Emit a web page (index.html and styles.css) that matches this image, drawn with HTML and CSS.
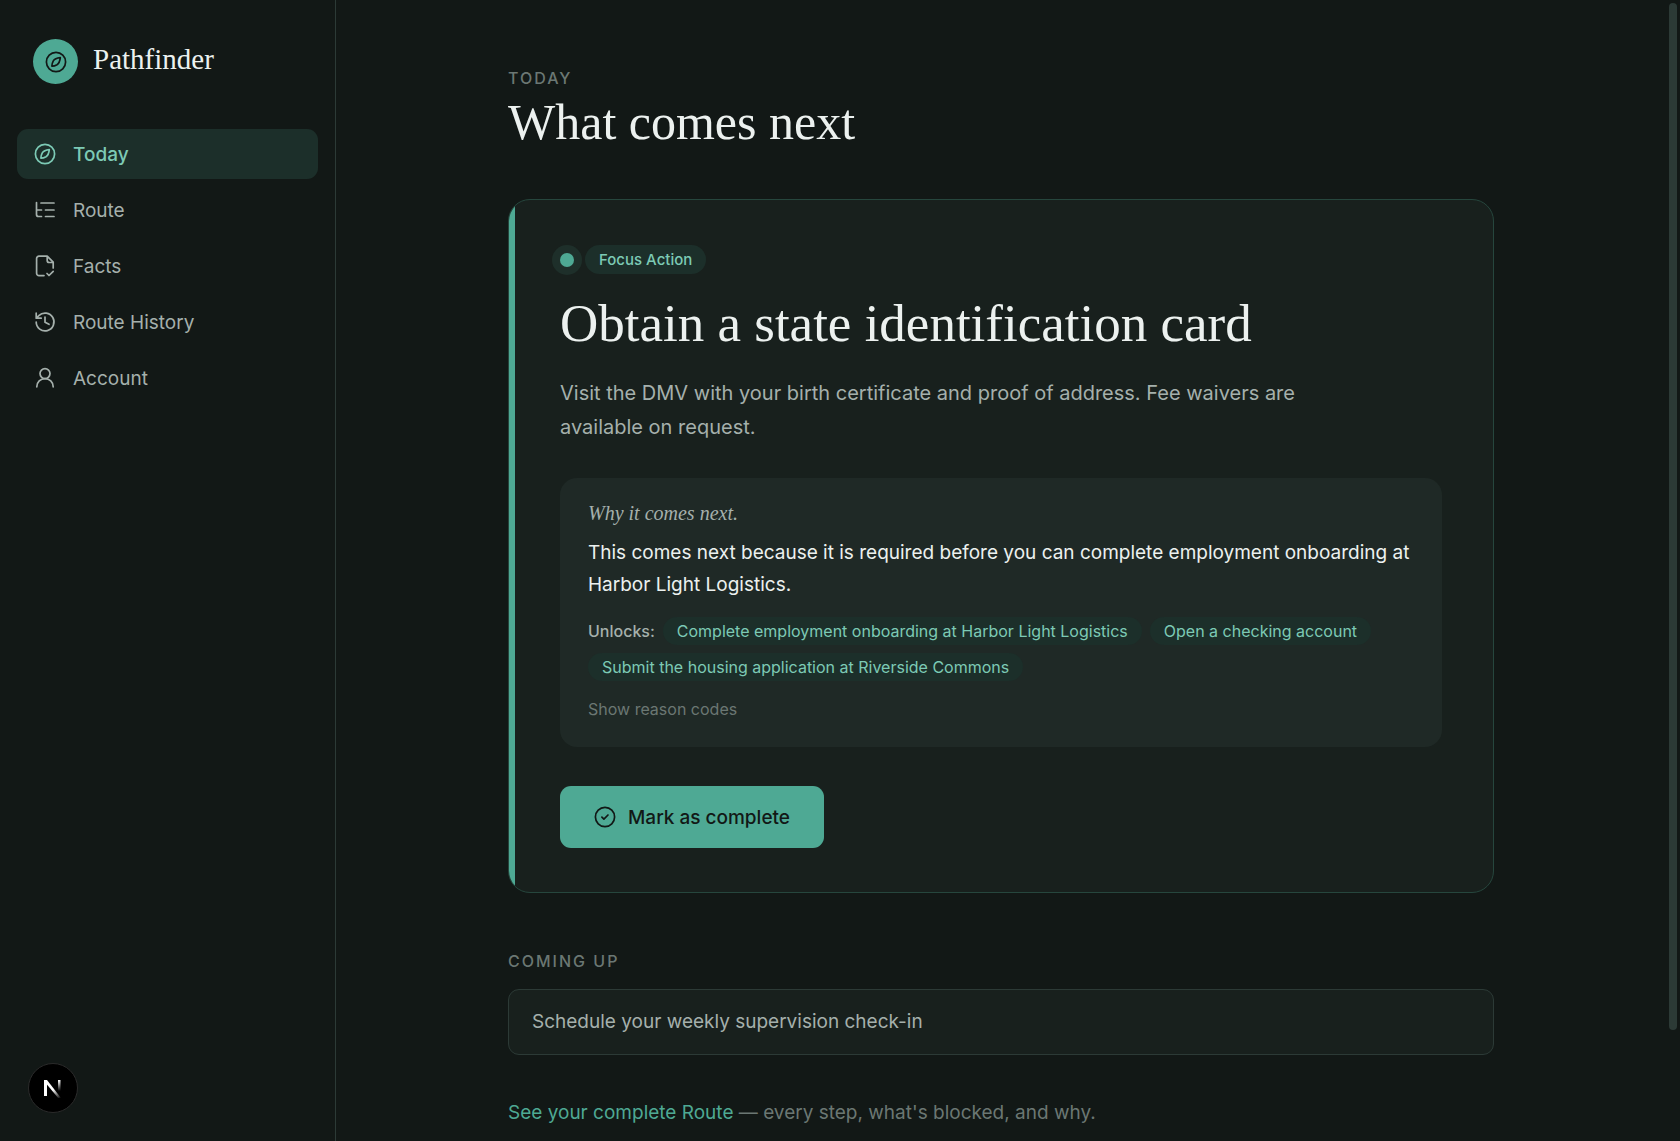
FILE: index.html
```html
<!DOCTYPE html>
<html lang="en">
<head>
    <meta charset="UTF-8">
    <meta name="viewport" content="width=device-width, initial-scale=1.0">
    <title>Pathfinder - Today</title>
    <link rel="stylesheet" href="styles.css">
</head>
<body>
    <div class="app">
        <aside class="sidebar">
            <a href="#" class="brand">
                <span class="brand-mark">
                    <svg class="icon" viewBox="0 0 22 22"><circle cx="11" cy="11" r="9.6"/><path d="M15.3 6.7c-3 .3-6 1.600-7 3.200-.8 1.500-1.400 3.500-1.400 5.200 1.700 0 3.700-.6 5.100-1.400 1.600-1 3-4 3.300-7z"/></svg>
                </span>
                <span class="brand-name">Pathfinder</span>
            </a>
            <nav class="nav">
                <a href="#" class="nav-link active">
                    <svg class="icon" viewBox="0 0 22 22"><circle cx="11" cy="11" r="9.6"/><path d="M15.3 6.7c-3 .3-6 1.600-7 3.200-.8 1.500-1.400 3.500-1.400 5.200 1.700 0 3.700-.6 5.100-1.400 1.600-1 3-4 3.300-7z"/></svg>
                    Today
                </a>
                <a href="#" class="nav-link">
                    <svg class="icon" viewBox="0 0 22 22"><path d="M7 4h13M11.5 11H20M11.5 17.5H20M2.500 3.500v12q0 2 2 2H7.500M2.500 11h5"/></svg>
                    Route
                </a>
                <a href="#" class="nav-link">
                    <svg class="icon" viewBox="0 0 22 22"><path d="M10 20.600H5a2.400 2.400 0 0 1-2.400-2.400V3.600a2.400 2.400 0 0 1 2.400-2.400h8.200l6 6V13M13.200 1.500v4q0 2 2 2h3.800M13 18.500l2 2 4.200-4.200"/></svg>
                    Facts
                </a>
                <a href="#" class="nav-link">
                    <svg class="icon" viewBox="0 0 22 22"><path d="M2.200 11a8.900 8.900 0 1 0 2.600-6.300L2.400 7M2.200 2.200v5h5M11 6v5.300l4 2"/></svg>
                    Route History
                </a>
                <a href="#" class="nav-link">
                    <svg class="icon" viewBox="0 0 22 22"><circle cx="11" cy="6.600" r="5"/><path d="M2.800 19.800c0-4.600 3.700-8.200 8.200-8.200s8.200 3.600 8.200 8.200"/></svg>
                    Account
                </a>
            </nav>
        </aside>

        <main class="main">
            <div class="content">
                <p class="eyebrow">Today</p>
                <h1>What comes next</h1>

                <section class="focus-card">
                    <div class="focus-label">
                        <span class="dot"></span>
                        <span class="badge">Focus Action</span>
                    </div>
                    <h2>Obtain a state identification card</h2>
                    <p class="description">Visit the DMV with your birth certificate and proof of address. Fee waivers are available on request.</p>

                    <div class="reason">
                        <p class="reason-title">Why it comes next.</p>
                        <p class="reason-text">This comes next because it is required before you can complete employment onboarding at Harbor Light Logistics.</p>
                        <div class="unlocks">
                            <span class="unlocks-label">Unlocks:</span>
                            <span class="chip">Complete employment onboarding at Harbor Light Logistics</span>
                            <span class="chip">Open a checking account</span>
                            <span class="chip">Submit the housing application at Riverside Commons</span>
                        </div>
                        <button type="button" class="codes-button">Show reason codes</button>
                    </div>

                    <button type="button" class="complete-button">
                        <svg class="icon" viewBox="0 0 22 22"><circle cx="11" cy="11" r="9.6"/><path d="M7.900 11.200l2 2L14 9"/></svg>
                        Mark as complete
                    </button>
                </section>

                <section class="upcoming">
                    <h3 class="eyebrow">Coming up</h3>
                    <div class="upcoming-item">Schedule your weekly supervision check-in</div>
                </section>

                <p class="route-note"><a href="#">See your complete Route</a> — every step, what's blocked, and why.</p>
            </div>
        </main>
    </div>

    <!-- Dev tools badge -->
    <button type="button" class="dev-badge" aria-label="Open dev tools">
        <svg viewBox="0 0 20 20">
            <defs>
                <linearGradient id="fadeDiagonal" gradientUnits="userSpaceOnUse" x1="11" y1="11" x2="18" y2="20">
                    <stop offset="0" stop-color="#fff"/>
                    <stop offset="1" stop-color="#fff" stop-opacity="0"/>
                </linearGradient>
                <linearGradient id="fadeStem" gradientUnits="userSpaceOnUse" x1="0" y1="2" x2="0" y2="13">
                    <stop offset="0" stop-color="#fff"/>
                    <stop offset="1" stop-color="#fff" stop-opacity="0"/>
                </linearGradient>
            </defs>
            <path d="M1 18V2h3v16z" fill="#fff"/>
            <path d="M1 2h3l14 18-2 1L1 3z" fill="url(#fadeDiagonal)"/>
            <path d="M15 2h2.500v11H15z" fill="url(#fadeStem)"/>
        </svg>
    </button>
    <div class="scroll-thumb"></div>
</body>
</html>
```

FILE: styles.css
```css
* {
    box-sizing: border-box;
}
body {
    margin: 0;
    background: #121816;
    color: #ecf1ef;
    font-family: Inter, "Liberation Sans", sans-serif;
    font-size: 19px;
}
h1, h2, h3, p {
    margin: 0;
    font-weight: 400;
}
h1, h2, .brand-name, .reason-title {
    font-family: "Liberation Serif", serif;
}
a {
    color: inherit;
    text-decoration: none;
}
button {
    font: inherit;
    border: none;
    cursor: pointer;
}
.icon {
    width: 22px;
    height: 22px;
    flex-shrink: 0;
    fill: none;
    stroke: currentColor;
    stroke-width: 1.7;
    stroke-linecap: round;
    stroke-linejoin: round;
}
.app {
    display: flex;
    height: 100vh;
}

/* Sidebar */
.sidebar {
    width: 336px;
    flex-shrink: 0;
    padding: 39px 17px;
    border-right: 1px solid #2c3a36;
}
.brand {
    display: flex;
    align-items: center;
    gap: 15px;
    padding: 0 16px;
    margin-bottom: 45px;
}
.brand-mark {
    display: flex;
    align-items: center;
    justify-content: center;
    width: 45px;
    height: 45px;
    border-radius: 50%;
    background: #4ea994;
    color: #121816;
}
.brand-name {
    font-size: 29px;
    line-height: 40px;
    padding-bottom: 5px;
}
.nav {
    display: flex;
    flex-direction: column;
    gap: 6px;
}
.nav-link {
    display: flex;
    align-items: center;
    gap: 17px;
    height: 50px;
    padding: 0 17px;
    border-radius: 11px;
    color: #a5b0ac;
}
.nav-link.active {
    background: #1c2f2a;
    color: #7ccab5;
    font-weight: 500;
}

/* Main column */
.main {
    flex: 1;
    min-width: 0;
    overflow-y: auto;
    scrollbar-width: none;
    padding: 67px 70px 67px 56px;
}
.content {
    max-width: 986px;
    margin: 0 auto;
}
.eyebrow {
    font-size: 16px;
    line-height: 22px;
    font-weight: 500;
    letter-spacing: 2px;
    text-transform: uppercase;
    color: #6b7773;
}
h1 {
    font-size: 50px;
    line-height: 66px;
}

/* Focus card */
.focus-card {
    position: relative;
    overflow: hidden;
    margin-top: 44px;
    padding: 45px 51px 44px;
    background: #18201d;
    border: 1px solid #26463d;
    border-radius: 22px;
}
.focus-card::before {
    content: "";
    position: absolute;
    top: 0;
    left: 0;
    bottom: 0;
    width: 6px;
    background: #4ea994;
}
.focus-label {
    display: flex;
    align-items: center;
    gap: 11px;
}
.dot {
    width: 14px;
    height: 14px;
    border-radius: 50%;
    background: #4ea994;
    box-shadow: 0 0 0 8px #1e2f2a;
}
.badge {
    padding: 0 14px;
    border-radius: 15px;
    background: #1c2f2a;
    color: #7ccab5;
    font-size: 15px;
    line-height: 29px;
    font-weight: 500;
}
h2 {
    margin-top: 16px;
    font-size: 53px;
    line-height: 66px;
}
.description {
    max-width: 780px;
    margin-top: 20px;
    font-size: 20px;
    line-height: 34px;
    color: #a5b0ac;
}
.reason {
    margin-top: 34px;
    padding: 22px 28px 24px;
    background: #1f2926;
    border-radius: 17px;
}
.reason-title {
    font-size: 20px;
    line-height: 26px;
    font-style: italic;
    color: #a5b0ac;
}
.reason-text {
    margin-top: 11px;
    line-height: 32px;
}
.unlocks {
    display: flex;
    flex-wrap: wrap;
    align-items: center;
    gap: 8px;
    margin-top: 16px;
    font-size: 16px;
    line-height: 28px;
}
.unlocks-label {
    color: #a5b0ac;
    font-weight: 500;
}
.chip {
    padding: 0 14px;
    border-radius: 14px;
    background: #1c2f2a;
    color: #7ccab5;
}
.codes-button {
    display: block;
    margin-top: 14px;
    padding: 0;
    background: none;
    color: #6b7773;
    font-size: 16px;
    line-height: 28px;
}
.complete-button {
    display: flex;
    align-items: center;
    gap: 12px;
    height: 62px;
    margin-top: 39px;
    padding: 0 34px;
    border-radius: 11px;
    background: #4ea994;
    color: #121816;
    font-weight: 500;
}

/* Coming up */
.upcoming {
    margin-top: 57px;
}
.upcoming-item {
    margin-top: 17px;
    padding: 16px 23px;
    background: #18201d;
    border: 1px solid #2c3a36;
    border-radius: 11px;
    line-height: 32px;
    color: #a5b0ac;
}
.route-note {
    margin-top: 42px;
    line-height: 32px;
    color: #6b7773;
}
.route-note a {
    color: #4ea994;
}

/* Overlays */
.dev-badge {
    position: fixed;
    left: 28px;
    bottom: 28px;
    display: flex;
    align-items: center;
    justify-content: center;
    width: 50px;
    height: 50px;
    padding: 0;
    border: 1px solid #2b2b2b;
    border-radius: 50%;
    background: #000;
}
.dev-badge svg {
    width: 20px;
    height: 20px;
}
.scroll-thumb {
    position: fixed;
    top: 3px;
    right: 3px;
    width: 8px;
    height: 90%;
    border-radius: 4px;
    background: #2c3a36;
}
```
